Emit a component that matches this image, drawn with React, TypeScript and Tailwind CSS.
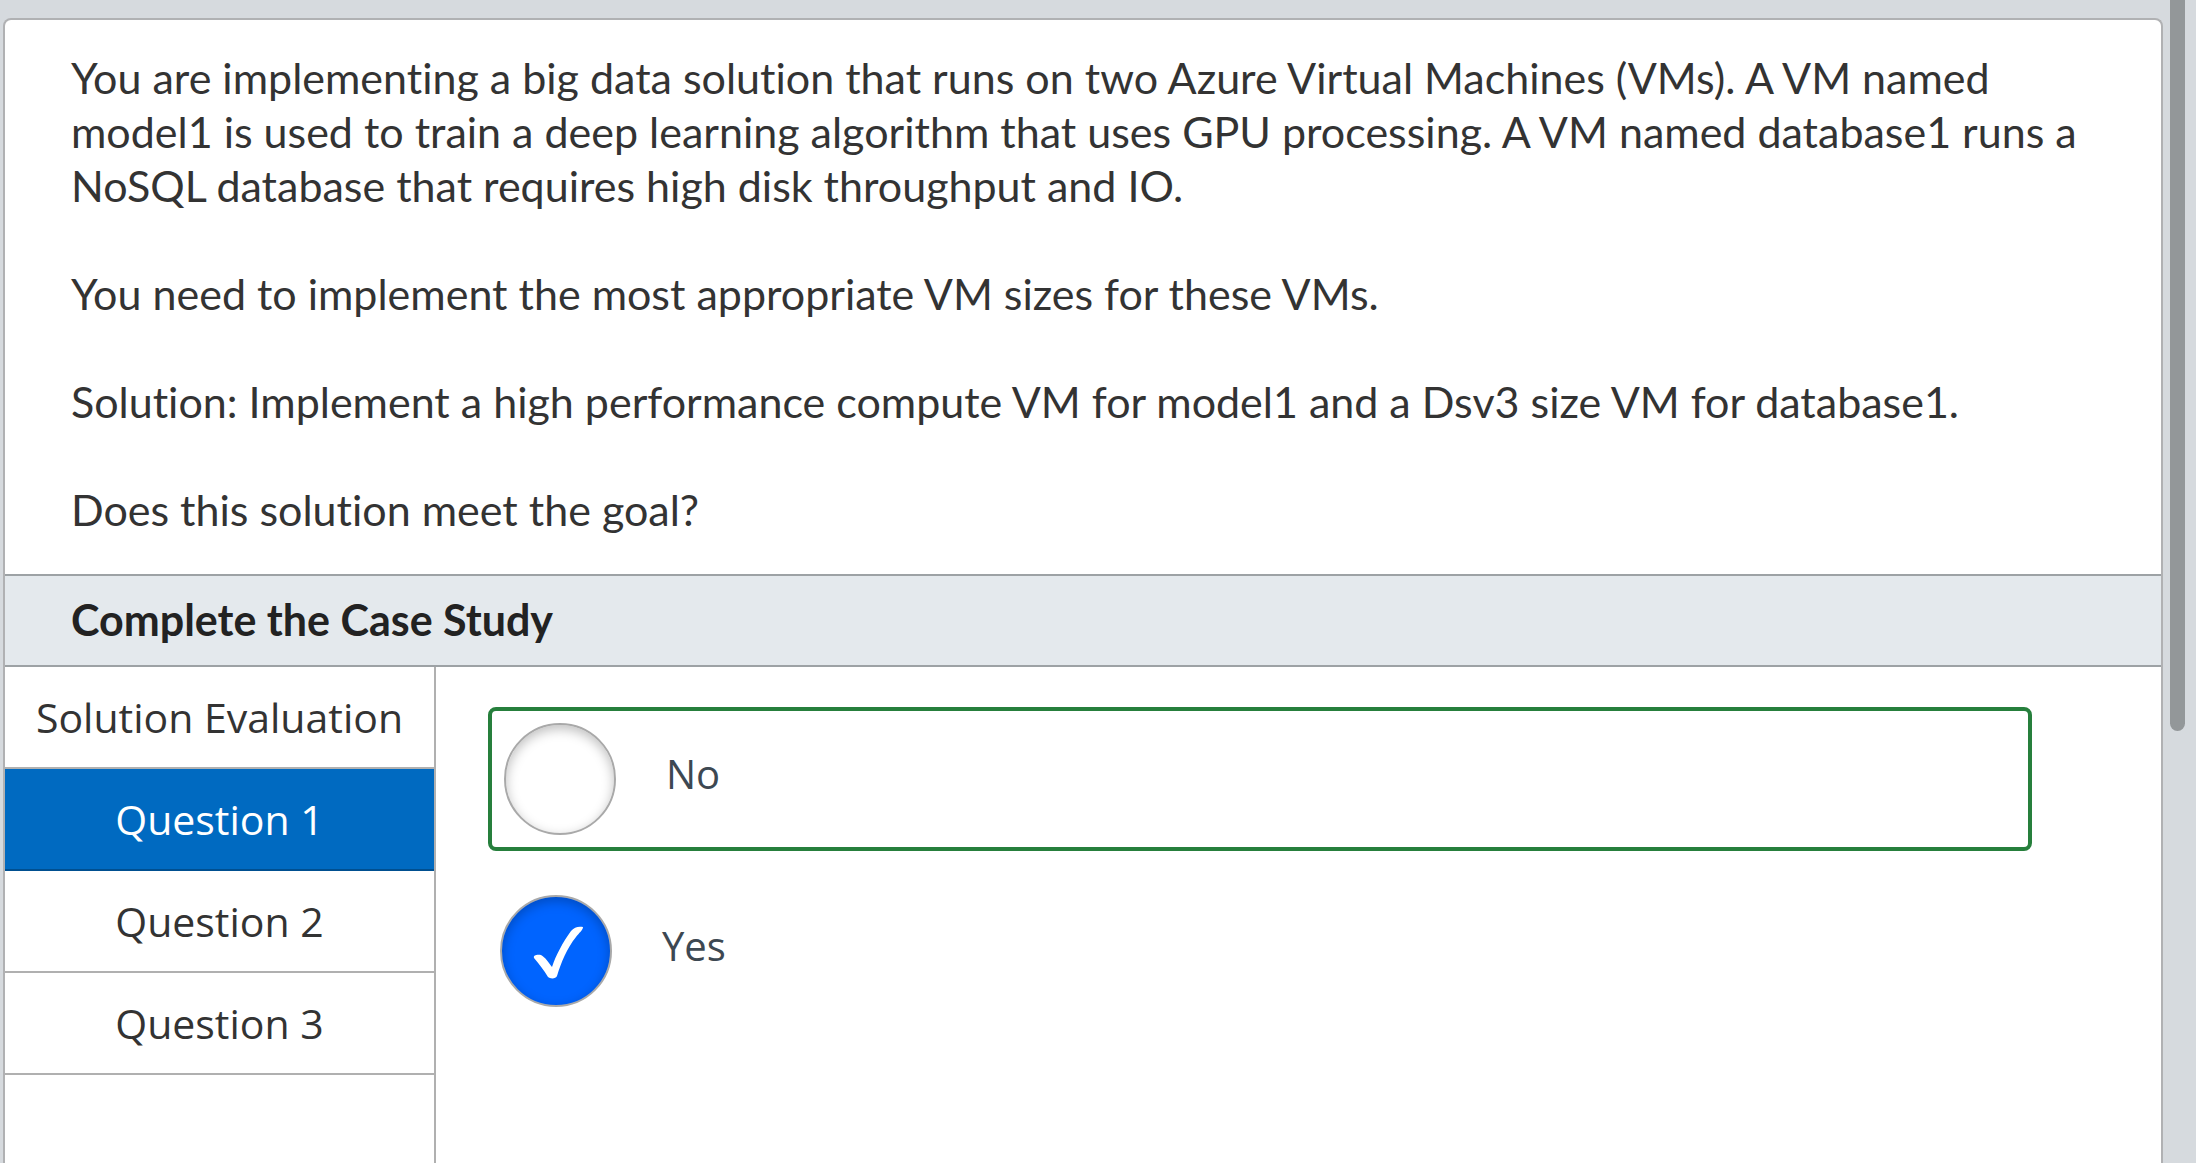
import { useState } from 'react';

const steps = ['Solution Evaluation', 'Question 1', 'Question 2', 'Question 3'];
const answers = ['No', 'Yes'];
const correct = 'No';

function CheckMark() {
  return (
    <svg
      viewBox="0 0 112 112"
      className="pointer-events-none absolute inset-0 hidden size-28 peer-checked:block"
      aria-hidden="true"
    >
      <path
        d="M34 63 C33 60 37 59.500 41 60 C45 62 49 68 52 72 C56 60 63 47 71 36 C74 32 79 31 83 32 C83 35 79 38 76 42 C67 53 61 68 57 81 C56 84 50 84 48 82 C44 75 39 69 34 63 Z"
        fill="#fff"
      />
    </svg>
  );
}

export default function App() {
  const [step, setStep] = useState('Question 1');
  const [answer, setAnswer] = useState('Yes');

  return (
    <div className="flex h-screen overflow-hidden bg-[#d6dade] font-['Open_Sans',sans-serif] text-[#333]">
      <main className="mt-[18px] ml-[3px] flex min-w-0 flex-1 flex-col overflow-hidden rounded-t-lg border-2 border-b-0 border-[#b0b1b3] bg-white">
        <section className="space-y-[54px] pt-[31px] pr-16 pb-[37px] pl-[66px] font-[Lato,sans-serif] text-[43px] leading-[54px] [font-variant-ligatures:none]">
          <p>
            You are implementing a big data solution that runs on two Azure Virtual Machines (VMs). A VM named
            <br />
            model1 is used to train a deep learning algorithm that uses GPU processing. A VM named database1 runs a
            <br />
            NoSQL database that requires high disk throughput and IO.
          </p>
          <p>You need to implement the most appropriate VM sizes for these VMs.</p>
          <p>Solution: Implement a high performance compute VM for model1 and a Dsv3 size VM for database1.</p>
          <p>Does this solution meet the goal?</p>
        </section>
        <h1 className="flex h-[93px] shrink-0 items-center border-y-2 border-[#9da2a5] bg-[#e4e9ed] px-[66px] font-[Lato,sans-serif] text-[43px] font-bold text-[#222]">
          Complete the Case Study
        </h1>
        <div className="flex flex-1">
          <nav className="flex w-[431px] shrink-0 flex-col border-r-2 border-[#b0b0b0]">
            {steps.map((name) => (
              <button
                key={name}
                type="button"
                onClick={() => setStep(name)}
                className={
                  name === step
                    ? 'h-[102px] border-b-2 border-[#004f90] bg-[#006ac1] pt-0.5 text-[41px] text-white'
                    : 'h-[102px] border-b-2 border-[#b0b0b0] pt-0.5 text-[41px]'
                }
              >
                {name}
              </button>
            ))}
          </nav>
          <fieldset className="flex min-w-0 flex-1 flex-col gap-8 pt-10 pr-[129px] pl-[52px]">
            {answers.map((name) => (
              <label
                key={name}
                className={
                  name === correct
                    ? 'flex items-center gap-[50px] rounded-lg border-4 border-[#267f3c] p-3'
                    : 'flex items-center gap-[50px] p-3'
                }
              >
                <span className="relative size-28 shrink-0">
                  <input
                    type="radio"
                    name="answer"
                    value={name}
                    checked={answer === name}
                    onChange={() => setAnswer(name)}
                    className="peer block size-28 appearance-none rounded-full border-2 border-[#a9a9a9] bg-white shadow-[inset_0_4px_12px_rgba(0,0,0,0.25)] checked:bg-[#0064ff]"
                  />
                  <CheckMark />
                </span>
                <span className="pb-2.5 text-[40px] text-[#3d4852]">{name}</span>
              </label>
            ))}
          </fieldset>
        </div>
      </main>
      <div className="mr-[11px] ml-[7px] h-[731px] w-[15px] rounded-b-full bg-[#939799]" />
    </div>
  );
}
